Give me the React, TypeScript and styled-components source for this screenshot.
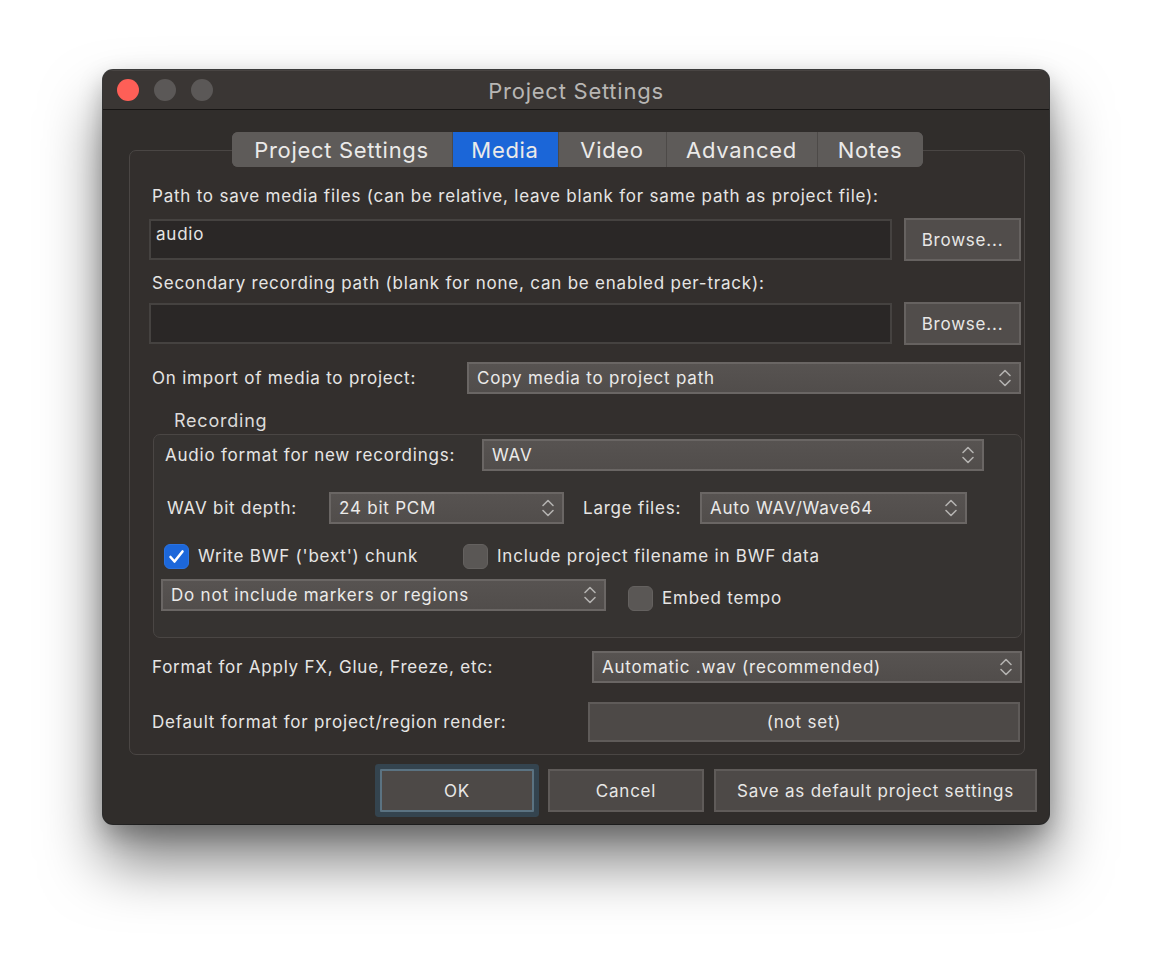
import React from "react"
import styled, { createGlobalStyle } from "styled-components"

const GlobalStyle = createGlobalStyle`
	html, body {
		margin: 0;
		padding: 0;
		background: #ffffff;
	}
	body {
		font-family: Inter, "Liberation Sans", Arial, sans-serif;
		-webkit-font-smoothing: antialiased;
	}
`

const Chevrons: React.FC = () => (
	<svg width="14" height="20" viewBox="0 0 14 20" fill="none">
		<path d="M2 7.5 L7 2.5 L12 7.5" stroke="#b4b2b0" strokeWidth="1.6" strokeLinecap="round" strokeLinejoin="round" />
		<path d="M2 12.5 L7 17.5 L12 12.5" stroke="#b4b2b0" strokeWidth="1.6" strokeLinecap="round" strokeLinejoin="round" />
	</svg>
)

const Tick: React.FC = () => (
	<svg width="17" height="15" viewBox="0 0 17 15" fill="none">
		<path d="M2.5 8 L6.5 12.5 L14.5 2.5" stroke="#ffffff" strokeWidth="2.6" strokeLinecap="round" strokeLinejoin="round" />
	</svg>
)

const Select: React.FC<{ value: string; width: number }> = ({ value, width }) => (
	<SelectBox $width={width}>
		<SelectText>{value}</SelectText>
		<Chevrons />
	</SelectBox>
)

const Check: React.FC<{ checked?: boolean; label: string }> = ({ checked, label }) => (
	<CheckLabel>
		<CheckBox $checked={!!checked}>{checked && <Tick />}</CheckBox>
		{label}
	</CheckLabel>
)

const tabs = [
	{ name: "Project Settings", width: 220 },
	{ name: "Media", width: 106 },
	{ name: "Video", width: 108 },
	{ name: "Advanced", width: 151 },
	{ name: "Notes", width: 106 },
]

const App: React.FC = () => {
	return (
		<>
			<GlobalStyle />
			<Page>
				<Window>
					<TitleBar>
						<Lights>
							<Light $color="#fe5f57" />
							<Light $color="#5b5857" />
							<Light $color="#5b5857" />
						</Lights>
						<Title>Project Settings</Title>
					</TitleBar>
					<Body>
						<TabFrame>
							<TabBar>
								{tabs.map((t) => (
									<Tab key={t.name} $width={t.width} $active={t.name === "Media"}>
										{t.name}
									</Tab>
								))}
							</TabBar>
							<Panel>
								<Label>
									Path to save media files (can be relative, leave blank for same path as project file):
								</Label>
								<PathRow>
									<TextInput>audio</TextInput>
									<Button>Browse...</Button>
								</PathRow>
								<Label $top={11}>
									Secondary recording path (blank for none, can be enabled per-track):
								</Label>
								<PathRow $top={8}>
									<TextInput />
									<Button>Browse...</Button>
								</PathRow>
								<FieldRow $cols="318px 554px" $top={17}>
									<Label>On import of media to project:</Label>
									<Select value="Copy media to project path" width={554} />
								</FieldRow>
								<Legend>Recording</Legend>
								<Group>
									<GroupRow $cols="317px 502px" $top={0} $left={12}>
										<Label $inset={0}>Audio format for new recordings:</Label>
										<Select value="WAV" width={502} />
									</GroupRow>
									<GroupRow $cols="162px 235px 136px 267px" $top={21} $left={14}>
										<Label $inset={0}>WAV bit depth:</Label>
										<Select value="24 bit PCM" width={235} />
										<Label $inset={19}>Large files:</Label>
										<Select value="Auto WAV/Wave64" width={267} />
									</GroupRow>
									<GroupRow $cols="299px auto" $top={20} $left={11}>
										<Check checked label="Write BWF ('bext') chunk" />
										<Check label="Include project filename in BWF data" />
									</GroupRow>
									<GroupRow $cols="445px auto" $top={10} $left={8} $gap={22} $align="end">
										<Select value="Do not include markers or regions" width={445} />
										<Check label="Embed tempo" />
									</GroupRow>
								</Group>
								<FieldRow $cols="443px 430px" $top={13}>
									<Label>Format for Apply FX, Glue, Freeze, etc:</Label>
									<Select value="Automatic .wav (recommended)" width={430} />
								</FieldRow>
								<FieldRow $cols="439px 432px" $top={19}>
									<Label>Default format for project/region render:</Label>
									<WideButton>(not set)</WideButton>
								</FieldRow>
							</Panel>
						</TabFrame>
						<Footer>
							<FocusButton>OK</FocusButton>
							<FooterButton $width={156}>Cancel</FooterButton>
							<FooterButton $width={323}>Save as default project settings</FooterButton>
						</Footer>
					</Body>
				</Window>
			</Page>
		</>
	)
}

export default App

const Page = styled.div`
	width: 1152px;
	height: 960px;
	padding: 70px 0 0 103px;
	box-sizing: border-box;
	background: #ffffff;
`

const Window = styled.div`
	width: 946px;
	height: 754px;
	border-radius: 10px;
	background: #302d2b;
	overflow: hidden;
	box-shadow: 0 0 0 1px rgba(0, 0, 0, 0.75), 0 38px 60px rgba(0, 0, 0, 0.5),
		0 10px 25px rgba(0, 0, 0, 0.25);
	display: flex;
	flex-direction: column;
	font-size: 17px;
	letter-spacing: 0.78px;
	color: #e6e5e4;
`

const TitleBar = styled.div`
	height: 39px;
	flex: none;
	display: grid;
	grid-template-columns: 1fr auto 1fr;
	align-items: center;
	padding: 0 14px;
	background: #3a3634;
	border-bottom: 1px solid #171514;
	box-shadow: inset 0 1px 0 rgba(255, 255, 255, 0.08);
`

const Lights = styled.div`
	display: flex;
	gap: 15px;
`

const Light = styled.span<{ $color: string }>`
	width: 22px;
	height: 22px;
	border-radius: 50%;
	background: ${(p) => p.$color};
`

const Title = styled.div`
	font-size: 22px;
	letter-spacing: 0.75px;
	color: #b8b6b4;
	padding-top: 2px;
`

const Body = styled.div`
	flex: 1;
	display: flex;
	flex-direction: column;
	padding: 22px 12px 12px 26px;
`

const TabFrame = styled.div`
	display: flex;
	flex-direction: column;
	width: 896px;
`

const TabBar = styled.div`
	align-self: center;
	display: flex;
	height: 35px;
	border-radius: 6px;
	overflow: hidden;
	background: #5e5b59;
	position: relative;
	z-index: 1;
`

const Tab = styled.div<{ $active: boolean; $width: number }>`
	width: ${(p) => p.$width}px;
	box-sizing: border-box;
	display: flex;
	align-items: center;
	justify-content: center;
	font-size: 22px;
	letter-spacing: 0.7px;
	color: #ebeae9;
	background: ${(p) => (p.$active ? "#1b66d8" : "#5e5b59")};
	& + & {
		border-left: 1px solid #4d4a48;
	}
`

const Panel = styled.div`
	margin-top: -17px;
	height: 605px;
	box-sizing: border-box;
	padding: 34px 3px 12px 19px;
	border: 1px solid #4a4644;
	border-radius: 7px;
	background: #332f2d;
	display: flex;
	flex-direction: column;
`

const Label = styled.div<{ $top?: number; $inset?: number }>`
	line-height: 22px;
	white-space: nowrap;
	margin-top: ${(p) => p.$top ?? 0}px;
	padding-left: ${(p) => p.$inset ?? 3}px;
`

const PathRow = styled.div<{ $top?: number }>`
	display: flex;
	align-items: center;
	gap: 12px;
	height: 43px;
	margin-top: ${(p) => p.$top ?? 11}px;
`

const TextInput = styled.div`
	flex: 1;
	height: 41px;
	box-sizing: border-box;
	display: flex;
	align-items: center;
	padding: 0 0 12px 5px;
	background: #2a2726;
	border: 2px solid #454240;
	color: #e6e5e4;
`

const Button = styled.div`
	width: 117px;
	height: 43px;
	box-sizing: border-box;
	display: flex;
	align-items: center;
	justify-content: center;
	background: #514d4b;
	border: 2px solid #666260;
	color: #e8e7e6;
`

const FieldRow = styled.div<{ $cols: string; $top: number }>`
	display: grid;
	grid-template-columns: ${(p) => p.$cols};
	align-items: center;
	margin-top: ${(p) => p.$top}px;
`

const SelectBox = styled.div<{ $width: number }>`
	width: ${(p) => p.$width}px;
	height: 32px;
	box-sizing: border-box;
	display: flex;
	align-items: center;
	justify-content: space-between;
	padding: 0 7px 0 8px;
	background: linear-gradient(#575351, #514d4b);
	border: 2px solid #6a6664;
`

const SelectText = styled.span`
	white-space: nowrap;
	color: #ebeae9;
`

const Legend = styled.div`
	margin-top: 16px;
	padding-left: 25px;
	line-height: 22px;
	font-size: 18px;
	color: #dcdbda;
`

const Group = styled.div`
	margin: 2px -1px 0 4px;
	height: 206px;
	box-sizing: border-box;
	padding-top: 4px;
	border: 1px solid #4a4644;
	border-radius: 7px;
	background: #363331;
	display: flex;
	flex-direction: column;
`

const GroupRow = styled.div<{
	$cols: string
	$top: number
	$left: number
	$gap?: number
	$align?: string
}>`
	display: grid;
	grid-template-columns: ${(p) => p.$cols};
	column-gap: ${(p) => p.$gap ?? 0}px;
	align-items: ${(p) => p.$align ?? "center"};
	margin-top: ${(p) => p.$top}px;
	padding-left: ${(p) => p.$left - 1}px;
`

const CheckLabel = styled.label`
	display: flex;
	align-items: center;
	gap: 9px;
	white-space: nowrap;
	line-height: 25px;
`

const CheckBox = styled.span<{ $checked: boolean }>`
	width: 25px;
	height: 25px;
	flex: none;
	box-sizing: border-box;
	border-radius: 6px;
	display: flex;
	align-items: center;
	justify-content: center;
	background: ${(p) => (p.$checked ? "#1c67da" : "#5a5755")};
	border: 1px solid ${(p) => (p.$checked ? "#2a72e0" : "#64615f")};
`

const WideButton = styled.div`
	width: 432px;
	height: 40px;
	box-sizing: border-box;
	display: flex;
	align-items: center;
	justify-content: center;
	background: #4d4947;
	border: 2px solid #5f5b59;
	color: #e8e7e6;
`

const Footer = styled.div`
	display: flex;
	justify-content: flex-end;
	gap: 10px;
	margin-top: 14px;
`

const FooterButton = styled.div<{ $width: number }>`
	width: ${(p) => p.$width}px;
	height: 43px;
	box-sizing: border-box;
	display: flex;
	align-items: center;
	justify-content: center;
	background: #4d4947;
	border: 2px solid #5f5b59;
	color: #e8e7e6;
`

const FocusButton = styled(FooterButton).attrs({ $width: 154 })`
	margin-right: 4px;
	border-color: #5b7382;
	box-shadow: 0 0 0 5px #34444f;
	border-radius: 1px;
`
